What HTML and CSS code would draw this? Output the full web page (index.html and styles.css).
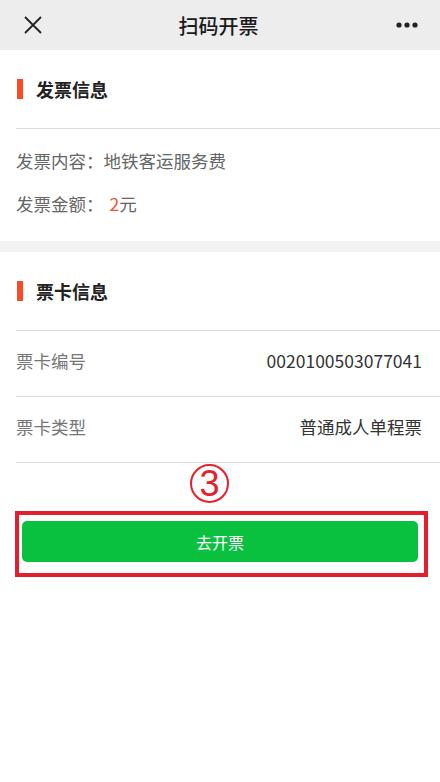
FILE: index.html
```html
<!DOCTYPE html>
<html lang="zh-CN">
<head>
    <meta charset="UTF-8">
    <meta name="viewport" content="width=device-width, initial-scale=1.0">
    <title>扫码开票</title>
    <link rel="stylesheet" href="styles.css">
</head>
<body>
    <div class="navbar">
        <svg class="nav-close" width="18" height="18" viewBox="0 0 18 18">
            <path d="M1 1 L17 17 M17 1 L1 17" stroke="#222" stroke-width="1.8" fill="none"/>
        </svg>
        <div class="nav-title">扫码开票</div>
        <svg class="nav-more" width="24" height="8" viewBox="0 0 24 8">
            <circle cx="4" cy="4" r="2.6" fill="#222"/>
            <circle cx="12" cy="4" r="2.6" fill="#222"/>
            <circle cx="20" cy="4" r="2.6" fill="#222"/>
        </svg>
    </div>

    <div class="section">
        <div class="section-title"><span class="bar"></span>发票信息</div>
        <div class="info-list">
            <div class="info-row">发票内容：地铁客运服务费</div>
            <div class="info-row">发票金额：<span class="amount">2</span>元</div>
        </div>
    </div>

    <div class="section section-last">
        <div class="section-title"><span class="bar"></span>票卡信息</div>
        <div class="kv-row">
            <span class="kv-label">票卡编号</span>
            <span class="kv-value">0020100503077041</span>
        </div>
        <div class="kv-row">
            <span class="kv-label">票卡类型</span>
            <span class="kv-value">普通成人单程票</span>
        </div>
        <div class="step-mark"><span>3</span></div>
        <div class="highlight-box">
            <button class="btn-primary">去开票</button>
        </div>
    </div>
</body>
</html>
```

FILE: styles.css
```css
body {
    margin: 0;
    font-family: "Noto Sans CJK SC", "Liberation Sans", sans-serif;
    background-color: #f2f2f2;
    color: #333;
}
.navbar {
    height: 50px;
    background-color: #ededed;
    display: flex;
    align-items: center;
    justify-content: space-between;
    padding: 0 21px 0 24px;
}
.nav-title {
    font-size: 20px;
    color: #1a1a1a;
    font-weight: 500;
}
.nav-more {
    margin-top: -1px;
}
.section {
    background: white;
    padding-left: 16px;
    margin-bottom: 11px;
}
.section-last {
    margin-bottom: 0;
    min-height: 531px;
}
.section-title {
    height: 78px;
    display: flex;
    align-items: center;
    font-size: 18px;
    font-weight: bold;
    color: #222;
    border-bottom: 1px solid #dcdcdc;
}
.bar {
    width: 6px;
    height: 20px;
    background-color: #fa4a26;
    margin: 0 13px 0 1px;
}
.info-list {
    padding: 10px 0 16px;
}
.info-row {
    height: 43px;
    line-height: 43px;
    font-size: 17.5px;
    color: #666;
}
.amount {
    color: #f0553a;
    margin-left: 6px;
}
.kv-row {
    height: 59px;
    display: flex;
    align-items: center;
    justify-content: space-between;
    padding: 0 18px 6px 0;
    border-bottom: 1px solid #dcdcdc;
    font-size: 17.5px;
}
.kv-label {
    color: #777;
}
.kv-value {
    color: #333;
}
.step-mark {
    display: flex;
    padding: 1px 0 8px 174px;
}
.step-mark span {
    width: 35px;
    height: 35px;
    border: 2.5px solid #e8202a;
    border-radius: 50%;
    color: #e8202a;
    font-family: "Liberation Sans", sans-serif;
    font-size: 36px;
    line-height: 36px;
    text-align: center;
}
.highlight-box {
    margin: 0 12px 0 -1px;
    border: 4px solid #e41e2a;
    padding: 6px 6px 11px 3px;
}
.btn-primary {
    display: block;
    width: 100%;
    height: 41px;
    background-color: #09c13e;
    color: white;
    border: none;
    border-radius: 5px;
    font-family: "Noto Sans CJK SC", sans-serif;
    font-size: 16px;
}
```
